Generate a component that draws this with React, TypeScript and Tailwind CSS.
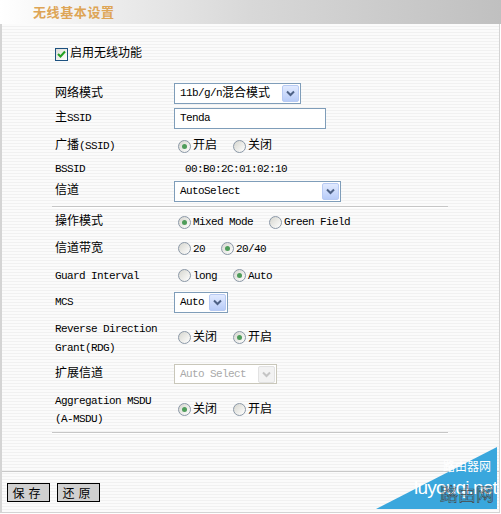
import React from 'react';

// latin text in the old router page is half-width, ~6px per char
const M = ({ children }: { children: React.ReactNode }) => (
  <span className="text-[11px] tracking-[-0.6px]">{children}</span>
);

const Radio = ({ checked, label }: { checked?: boolean; label: React.ReactNode }) => (
  <span className="flex items-center">
    <span className="ml-[4px] mr-[2px] flex h-[13px] w-[13px] items-center justify-center rounded-full border border-[#8b98a7] bg-[linear-gradient(135deg,#d6d6cf,#ffffff)]">
      {checked && <span className="h-[5px] w-[5px] rounded-full bg-[#4e9c5a]" />}
    </span>
    <span>{label}</span>
  </span>
);

const Arrow = ({ disabled }: { disabled?: boolean }) => (
  <span
    className={`ml-auto mr-[1px] flex h-[17px] w-[17px] items-center justify-center rounded-[2px] border ${
      disabled
        ? 'border-[#e2e2e2] bg-[#f2f2f2]'
        : 'border-[#b7caf3] bg-[linear-gradient(180deg,#e1eaff,#b8ccf8)]'
    }`}
  >
    <svg width="9" height="7" viewBox="0 0 9 7">
      <path d="M1 1.5 L4.5 5 L8 1.5" fill="none" stroke={disabled ? '#c4c4c4' : '#4d6185'} strokeWidth="2" />
    </svg>
  </span>
);

const Row = ({ label, h, children }: { label: React.ReactNode; h: string; children?: React.ReactNode }) => (
  <div className={`flex items-center ${h}`}>
    <div className="w-[119px]">{label}</div>
    <div className="flex items-center">{children}</div>
  </div>
);

const Sep = () => <div className="ml-[50px] h-[2px] w-[396px] border-t border-[#c6c6c6] bg-white" />;

export default function App() {
  return (
    <div className="relative h-[514px] w-[501px] overflow-hidden bg-white font-['Liberation_Mono','Noto_Sans_CJK_SC',monospace] text-[12px] text-black">
      {/* title bar */}
      <div className="flex h-[24px] items-center bg-[linear-gradient(90deg,#ffffff_0%,#eeeeee_20%,#d8d8d8_50%,#c0c0c0_100%)] pl-[33px]">
        <span className="font-['Noto_Sans_CJK_SC',sans-serif] text-[13px] font-bold tracking-[0.6px] text-[#dea556]">
          无线基本设置
        </span>
      </div>

      <div className="h-[489px] w-[500px] border-b border-l-2 border-r border-[#d4d4d4] bg-[repeating-linear-gradient(180deg,#fbfbfb_0px,#fbfbfb_2px,#f1f1f1_2px,#f1f1f1_3px)]">
        <div className="pl-[53px] pt-[18px]">
          <div className="flex h-[24px] items-center">
            <span className="mr-[2px] flex h-[13px] w-[13px] items-center justify-center border border-[#1c5180] bg-[linear-gradient(135deg,#dcdcd7,#ffffff)]">
              <svg width="9" height="8" viewBox="0 0 9 8">
                <path d="M1 4 L3.5 6.5 L8 1.5" fill="none" stroke="#21a121" strokeWidth="2" />
              </svg>
            </span>
            <span>启用无线功能</span>
          </div>

          <div className="mt-[16px]">
            <Row label="网络模式" h="h-[23px]">
              <div className="flex h-[21px] w-[127px] items-center border border-[#7f9db9] bg-white pl-[5px]">
                <M>11b/g/n</M>混合模式
                <Arrow />
              </div>
            </Row>
            <Row label={<>主<M>SSID</M></>} h="h-[26px]">
              <div className="flex h-[21px] w-[152px] items-center border border-[#7f9db9] bg-white pl-[5px]">
                <M>Tenda</M>
              </div>
            </Row>
            <Row label={<>广播<M>(SSID)</M></>} h="h-[30px]">
              <div className="flex items-center gap-[12px]">
                <Radio checked label="开启" />
                <Radio label="关闭" />
              </div>
            </Row>
            <Row label={<M>BSSID</M>} h="h-[16px]">
              <span className="pl-[11px]">
                <M>00:B0:2C:01:02:10</M>
              </span>
            </Row>
            <Row label="信道" h="h-[28px]">
              <div className="flex h-[21px] w-[167px] items-center border border-[#7f9db9] bg-white pl-[5px]">
                <M>AutoSelect</M>
                <Arrow />
              </div>
            </Row>
          </div>
        </div>

        <div className="mt-[1px]">
          <Sep />
        </div>

        <div className="pl-[53px]">
          <Row label="操作模式" h="h-[28px]">
            <div className="flex items-center gap-[12px]">
              <Radio checked label={<M>Mixed Mode</M>} />
              <Radio label={<M>Green Field</M>} />
            </div>
          </Row>
          <Row label="信道带宽" h="h-[25px]">
            <div className="flex items-center gap-[12px]">
              <Radio label={<M>20</M>} />
              <Radio checked label={<M>20/40</M>} />
            </div>
          </Row>
          <Row label={<M>Guard Interval</M>} h="h-[29px]">
            <div className="flex items-center gap-[12px]">
              <Radio label={<M>long</M>} />
              <Radio checked label={<M>Auto</M>} />
            </div>
          </Row>
          <Row label={<M>MCS</M>} h="h-[24px]">
            <div className="flex h-[21px] w-[54px] items-center border border-[#7f9db9] bg-white pl-[5px]">
              <M>Auto</M>
              <Arrow />
            </div>
          </Row>
          <Row
            label={
              <div className="pt-[3px] leading-[19px]">
                <div><M>Reverse Direction</M></div>
                <div><M>Grant(RDG)</M></div>
              </div>
            }
            h="h-[47px]"
          >
            <div className="flex items-center gap-[12px]">
              <Radio label="关闭" />
              <Radio checked label="开启" />
            </div>
          </Row>
          <Row label="扩展信道" h="h-[26px]">
            <div className="flex h-[20px] w-[103px] items-center border border-[#c9c7ba] bg-white pl-[5px] text-[#a9a9a9]">
              <M>Auto Select</M>
              <Arrow disabled />
            </div>
          </Row>
          <Row
            label={
              <div className="leading-[18px]">
                <div><M>Aggregation MSDU</M></div>
                <div><M>(A-MSDU)</M></div>
              </div>
            }
            h="h-[45px]"
          >
            <div className="flex items-center gap-[12px]">
              <Radio checked label="关闭" />
              <Radio label="开启" />
            </div>
          </Row>
        </div>

        <Sep />

        <div className="mt-[37px] border-t border-[#c8c8c8]" />

        <div className="mt-[11px] flex gap-[7px] pl-[5px]">
          <button className="h-[19px] w-[43px] border border-black bg-[#d0d0d0] font-['Noto_Sans_CJK_SC',sans-serif] text-[12px] leading-none tracking-[4px]">
            保存
          </button>
          <button className="h-[19px] w-[43px] border border-black bg-[#d0d0d0] font-['Noto_Sans_CJK_SC',sans-serif] text-[12px] leading-none tracking-[4px]">
            还原
          </button>
        </div>
      </div>

      {/* site watermark */}
      <svg className="absolute left-[376px] top-[447px] z-10" width="121" height="63" viewBox="0 0 121 63">
        <polygon points="0,62 121,0 121,62" fill="#3aa7dd" />
      </svg>
      <div className="absolute left-[443px] top-[457px] z-10 font-['Noto_Sans_CJK_SC',sans-serif] text-[12px] leading-[18px] text-white">
        路由器网
      </div>
      <div className="absolute left-[414px] top-[476px] z-10 font-['Liberation_Sans',sans-serif] text-[19px] leading-[24px] tracking-[-0.8px] text-white">
        luyouqi.net
      </div>
      <div className="absolute left-[440px] top-[481px] z-20 font-['Noto_Sans_CJK_SC',sans-serif] text-[18px] leading-[24px] text-transparent [-webkit-text-stroke:0.6px_#4a4a4a]">
        路由网
      </div>
    </div>
  );
}
